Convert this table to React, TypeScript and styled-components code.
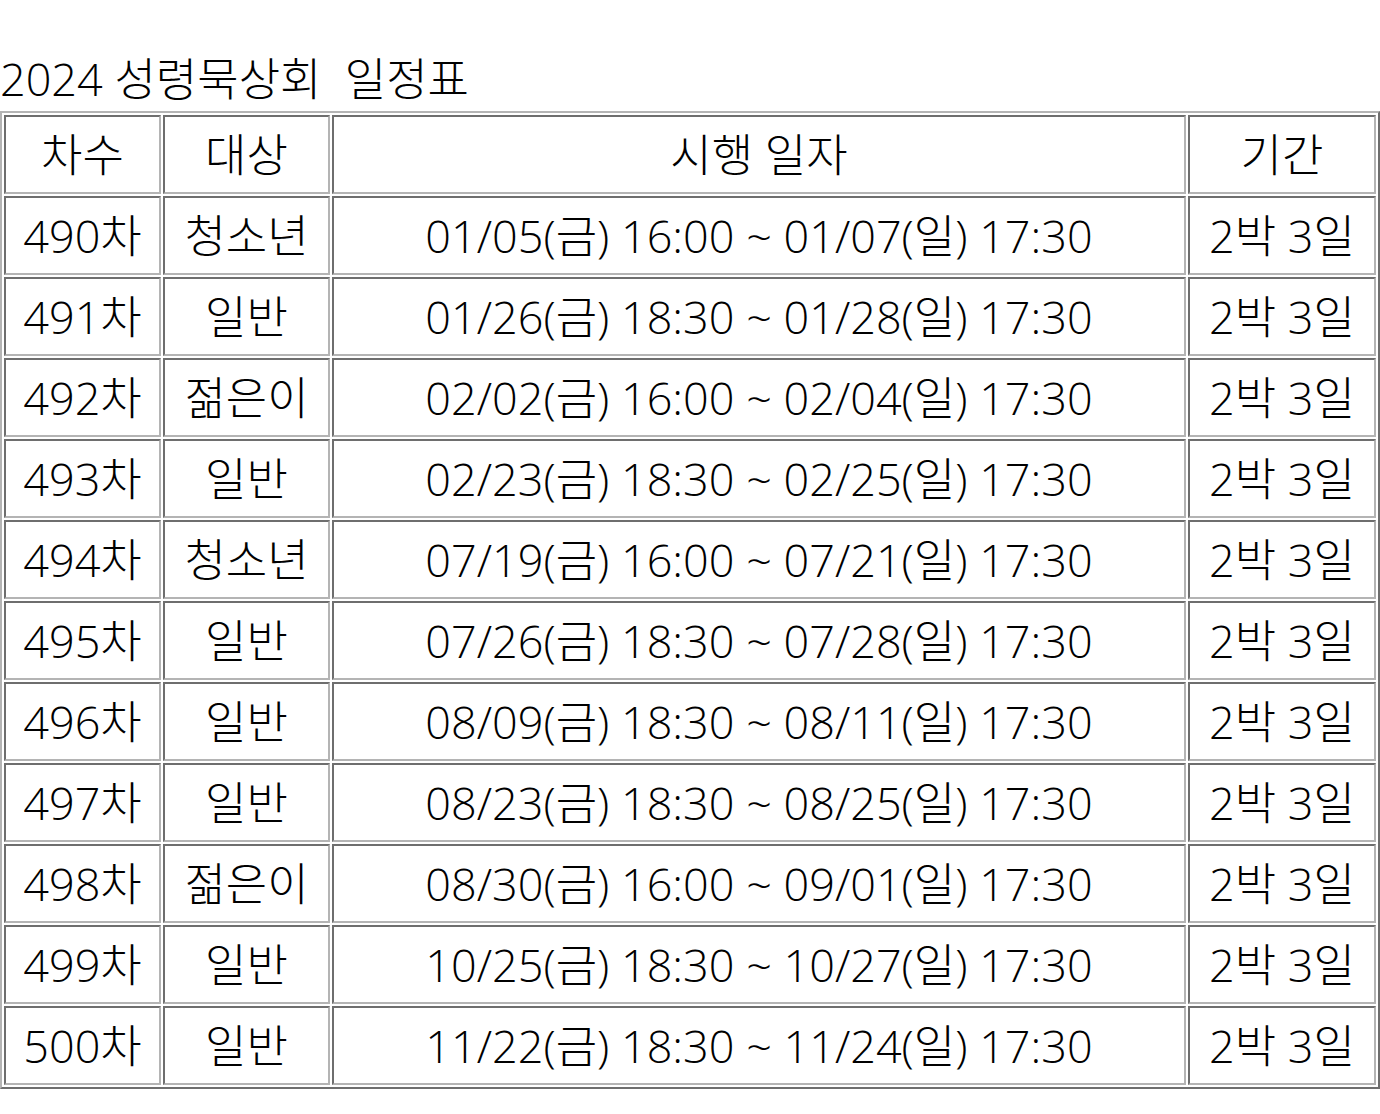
import React from "react";
import styled, { createGlobalStyle } from "styled-components";

const Global = createGlobalStyle`
  html, body { margin: 0; padding: 0; background: #ffffff; }
  body { font-family: "Open Sans", "Noto Sans CJK KR", sans-serif; color: #000; }
`;

const Page = styled.div`
  width: 1380px;
  padding-top: 48px;
`;

const Title = styled.div`
  font-family: "Open Sans", "Noto Sans CJK KR", sans-serif;
  font-size: 45px;
  font-weight: 300;
  line-height: 62px;
  white-space: pre;
`;

const Table = styled.table`
  width: 1380px;
  table-layout: fixed;
  border-collapse: separate;
  border-spacing: 2px;
  border-style: solid;
  border-width: 2px;
  border-color: #b4b4b4 #6e6e6e #6e6e6e #b4b4b4;
  margin-top: 1px;
`;

const Row = styled.tr`
  height: 79px;
`;

const Cell = styled.td`
  border-style: solid;
  border-width: 2px;
  border-color: #6e6e6e #b4b4b4 #b4b4b4 #6e6e6e;
  padding: 0;
  text-align: center;
  vertical-align: middle;
  font-family: "Open Sans", "Noto Sans CJK KR", sans-serif;
  font-size: 45px;
  font-weight: 300;
  line-height: 1.2;
  white-space: nowrap;
`;

const rows: [string, string, string][] = [
  ["490차", "청소년", "01/05(금) 16:00 ~ 01/07(일) 17:30"],
  ["491차", "일반", "01/26(금) 18:30 ~ 01/28(일) 17:30"],
  ["492차", "젊은이", "02/02(금) 16:00 ~ 02/04(일) 17:30"],
  ["493차", "일반", "02/23(금) 18:30 ~ 02/25(일) 17:30"],
  ["494차", "청소년", "07/19(금) 16:00 ~ 07/21(일) 17:30"],
  ["495차", "일반", "07/26(금) 18:30 ~ 07/28(일) 17:30"],
  ["496차", "일반", "08/09(금) 18:30 ~ 08/11(일) 17:30"],
  ["497차", "일반", "08/23(금) 18:30 ~ 08/25(일) 17:30"],
  ["498차", "젊은이", "08/30(금) 16:00 ~ 09/01(일) 17:30"],
  ["499차", "일반", "10/25(금) 18:30 ~ 10/27(일) 17:30"],
  ["500차", "일반", "11/22(금) 18:30 ~ 11/24(일) 17:30"],
];

export default function App() {
  return (
    <Page>
      <Global />
      <Title>{"2024 성령묵상회  일정표"}</Title>
      <Table>
        <colgroup>
          <col style={{ width: 157 }} />
          <col style={{ width: 167 }} />
          <col style={{ width: 854 }} />
          <col />
        </colgroup>
        <tbody>
          <Row>
            <Cell>차수</Cell>
            <Cell>대상</Cell>
            <Cell>시행 일자</Cell>
            <Cell>기간</Cell>
          </Row>
          {rows.map(([n, t, d]) => (
            <Row key={n}>
              <Cell>{n}</Cell>
              <Cell>{t}</Cell>
              <Cell>{d}</Cell>
              <Cell>2박 3일</Cell>
            </Row>
          ))}
        </tbody>
      </Table>
    </Page>
  );
}
